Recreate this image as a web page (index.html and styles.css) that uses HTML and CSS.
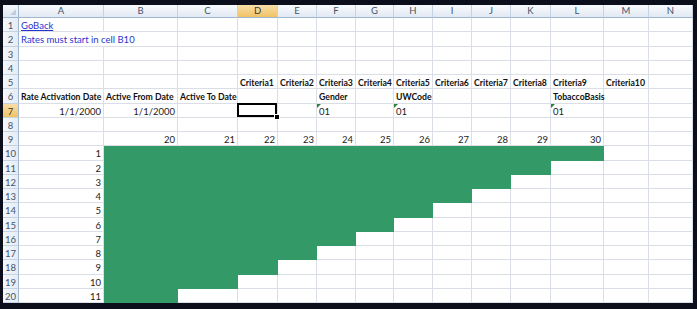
FILE: index.html
```html
<!DOCTYPE html>
<html lang="en">
<head>
    <meta charset="UTF-8">
    <meta name="viewport" content="width=device-width, initial-scale=1.0">
    <title>Rates</title>
    <link rel="stylesheet" href="styles.css">
</head>
<body>
    <div class="frame">
        <div class="sheet" id="sheet">
            <!-- Cells are added here by the script below -->
        </div>
    </div>

    <script>
        var cols = ['A', 'B', 'C', 'D', 'E', 'F', 'G', 'H', 'I', 'J', 'K', 'L', 'M', 'N'];

        // Cell contents, keyed by address
        var cells = {
            A1: { text: 'GoBack', cls: 'link' },
            A2: { text: 'Rates must start in cell B10', cls: 'note', span: 2 },
            A6: { text: 'Rate Activation Date', cls: 'bold' },
            B6: { text: 'Active From Date', cls: 'bold' },
            C6: { text: 'Active To Date', cls: 'bold' },
            F6: { text: 'Gender', cls: 'bold' },
            H6: { text: 'UWCode', cls: 'bold' },
            L6: { text: 'TobaccoBasis', cls: 'bold' },
            A7: { text: '1/1/2000', cls: 'num' },
            B7: { text: '1/1/2000', cls: 'num' },
            D7: { text: '', cls: 'active' },
            F7: { text: '01', cls: 'flag' },
            H7: { text: '01', cls: 'flag' },
            L7: { text: '01', cls: 'flag' }
        };

        // Criteria1..Criteria10 in D5..M5
        for (var i = 0; i < 10; i++) {
            cells[cols[i + 3] + '5'] = { text: 'Criteria' + (i + 1), cls: 'bold' };
        }

        // Ages 20..30 across row 9, durations 1..11 down column A
        for (var i = 0; i < 11; i++) {
            cells[cols[i + 1] + '9'] = { text: String(20 + i), cls: 'num' };
            cells['A' + (10 + i)] = { text: String(i + 1), cls: 'num' };
        }

        // Green triangle: row 10 fills B..L, each row below one column less
        for (var r = 10; r <= 20; r++) {
            for (var c = 1; c <= 11 - (r - 10); c++) {
                cells[cols[c] + r] = { text: '', cls: 'fill' };
            }
        }

        var sheet = document.getElementById('sheet');
        var html = '<div class="cell corner"></div>';

        for (var c = 0; c < cols.length; c++) {
            html += '<div class="cell col-head' + (cols[c] === 'D' ? ' head-on' : '') + '">' + cols[c] + '</div>';
        }

        for (var r = 1; r <= 20; r++) {
            html += '<div class="cell row-head' + (r === 7 ? ' head-on' : '') + '">' + r + '</div>';
            for (var c = 0; c < cols.length; c++) {
                var cell = cells[cols[c] + r];
                if (!cell) {
                    html += '<div class="cell"></div>';
                    continue;
                }
                var span = cell.span ? ' style="grid-column: span ' + cell.span + '"' : '';
                html += '<div class="cell ' + cell.cls + '"' + span + '>' + cell.text + '</div>';
                if (cell.span) c += cell.span - 1;
            }
        }

        sheet.innerHTML = html;
    </script>
</body>
</html>
```

FILE: styles.css
```css
body {
    margin: 0;
    background-color: #0c0e1c;
    font-family: Lato, "Liberation Sans", sans-serif;
}

.frame {
    width: 697px;
    height: 309px;
    box-sizing: border-box;
    padding: 5px 4px 6px 3px;
}

.sheet {
    display: grid;
    grid-template-columns: 16px 85px 74px 60px 40px 39px 39px 38px 39px 39px 39px 40px 53px 45px 44px;
    grid-template-rows: 13px repeat(20, 14.25px);
    background-color: #fff;
    font-size: 9.5px;
    color: #1c1c1c;
}

.cell {
    position: relative;
    box-sizing: border-box;
    border-right: 1px solid #d9dee7;
    border-bottom: 1px solid #d9dee7;
    padding: 1px 2px 0;
    line-height: 13px;
    white-space: nowrap;
}

.corner {
    background: linear-gradient(#f4f7fb, #e2e9f3);
    border-right: 1px solid #9eb6ce;
    border-bottom: 1px solid #9eb6ce;
}

.corner::after {
    content: '';
    position: absolute;
    right: 2px;
    bottom: 2px;
    border-bottom: 6px solid #c3cedc;
    border-left: 6px solid transparent;
}

.col-head {
    background: linear-gradient(#f8fafd, #e2e9f3);
    border-right: 1px solid #c5d2e1;
    border-bottom: 1px solid #9eb6ce;
    padding: 0;
    line-height: 12px;
    text-align: center;
    color: #44536a;
}

.row-head {
    background: linear-gradient(to right, #f4f7fb, #e5ecf5);
    border-right: 1px solid #9eb6ce;
    border-bottom: 1px solid #c5d2e1;
    padding: 1px 0 0;
    text-align: center;
    color: #44536a;
}

.head-on {
    background: linear-gradient(#f9dea9, #f1c263);
    color: #3a3a3a;
}

.bold {
    font-size: 8.7px;
    font-weight: bold;
    color: #111;
}

.num {
    text-align: right;
}

.link {
    color: #2a34cc;
    text-decoration: underline;
}

.note {
    color: #2a34cc;
}

.fill {
    background-color: #339966;
    border-color: #339966;
}

.flag::before {
    content: '';
    position: absolute;
    left: 0;
    top: 0;
    border-top: 4px solid #2c7f3c;
    border-right: 4px solid transparent;
}

.active::before {
    content: '';
    position: absolute;
    left: -1px;
    top: -1px;
    right: 0;
    bottom: 0;
    border: 2px solid #000;
    z-index: 1;
}

.active::after {
    content: '';
    position: absolute;
    right: -3px;
    bottom: -3px;
    width: 4px;
    height: 4px;
    background-color: #000;
    border: 1px solid #fff;
    z-index: 2;
}
```
